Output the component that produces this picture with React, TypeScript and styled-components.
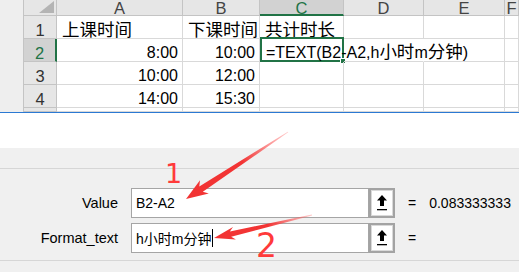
import React from "react";
import styled, { createGlobalStyle } from "styled-components";

const GREEN = "#217346";
const GRID = "#d9d9d9";
const HEAD_LINE = "#c4c4c4";

const GlobalStyle = createGlobalStyle`
  html, body {
    margin: 0;
    padding: 0;
    background: #ffffff;
  }
  body {
    font-family: "Liberation Sans", "Noto Sans CJK SC", sans-serif;
    color: #000;
  }
`;

const Page = styled.div`
  position: relative;
  width: 519px;
  height: 272px;
  overflow: hidden;
  display: flex;
  flex-direction: column;
  background: #fff;
`;

// 表格
const Sheet = styled.div`
  display: grid;
  grid-template-columns: 24px 33px 126px 77px 84px 80px 81px 14px;
  grid-template-rows: 16px repeat(4, 23px) 4px;
  border-bottom: 1px solid #2b79d3;
  font-size: 16px;
  line-height: 1;
`;

const Outline = styled.div`
  grid-row: 1 / -1;
  background: #eeeeee;
  border-right: 1px solid ${HEAD_LINE};
`;

const Corner = styled.div`
  position: relative;
  background: #e6e6e6;
  border-right: 1px solid ${HEAD_LINE};
  border-bottom: 1px solid ${HEAD_LINE};
  &::after {
    content: "";
    position: absolute;
    right: 2px;
    bottom: 2px;
    border-style: solid;
    border-width: 0 0 12px 15px;
    border-color: transparent transparent #b4b4b4 transparent;
  }
`;

const ColHead = styled.div<{ $active?: boolean }>`
  display: flex;
  justify-content: center;
  align-items: flex-start;
  font-size: 16.5px;
  background: ${(p) => (p.$active ? "#d2d2d2" : "#e6e6e6")};
  color: ${(p) => (p.$active ? GREEN : "#444")};
  border-right: 1px solid ${HEAD_LINE};
  border-bottom: ${(p) => (p.$active ? `2px solid ${GREEN}` : `1px solid ${HEAD_LINE}`)};
`;

const RowHead = styled.div<{ $active?: boolean }>`
  display: flex;
  justify-content: center;
  align-items: flex-end;
  font-size: 16.5px;
  background: ${(p) => (p.$active ? "#d2d2d2" : "#e6e6e6")};
  color: ${(p) => (p.$active ? GREEN : "#333")};
  border-right: ${(p) => (p.$active ? `2px solid ${GREEN}` : `1px solid ${HEAD_LINE}`)};
  border-bottom: 1px solid ${HEAD_LINE};
`;

const Cell = styled.div<{ $right?: boolean; $spill?: boolean }>`
  position: relative;
  display: flex;
  align-items: flex-end;
  justify-content: ${(p) => (p.$right ? "flex-end" : "flex-start")};
  padding: 0 4px 0 5px;
  min-width: 0;
  white-space: nowrap;
  border-right: 1px solid ${(p) => (p.$spill ? "transparent" : GRID)};
  border-bottom: 1px solid ${GRID};
`;

const Han = styled.span`
  font-size: 17.5px;
  line-height: 16px;
`;

const Spill = styled.span`
  position: relative;
  z-index: 1;
  padding-left: 1px;
`;

const Selection = styled.div`
  position: absolute;
  left: 0;
  top: -2px;
  right: -1px;
  bottom: -1px;
  border: 2px solid ${GREEN};
  pointer-events: none;
  &::after {
    content: "";
    position: absolute;
    right: -4px;
    bottom: -4px;
    width: 4px;
    height: 4px;
    background: ${GREEN};
    border: 1px solid #fff;
  }
`;

// 함수 인수 대화상자
const Dialog = styled.section`
  margin-top: 35px;
  flex: 1;
  background: #f0f0f0;
  padding-top: 20px;
  font-size: 14.5px;
`;

const Rule = styled.div`
  border-top: 1px solid #d6d6d6;
`;

const Form = styled.div`
  display: grid;
  grid-template-columns: 131px 238px 26px 1fr;
  grid-auto-rows: 30px;
  row-gap: 5px;
  align-items: center;
  padding: 19px 0 7px;
`;

const Label = styled.div`
  text-align: right;
  padding-right: 13px;
`;

const Field = styled.div`
  height: 30px;
  box-sizing: border-box;
  display: flex;
  align-items: center;
  padding-left: 4px;
  background: #fff;
  border: 1px solid #a5a5a5;
  font-size: 14px;
  white-space: nowrap;
`;

const Caret = styled.span`
  display: inline-block;
  width: 1px;
  height: 18px;
  margin-left: 1px;
  background: #000;
`;

const RefButton = styled.div`
  height: 30px;
  box-sizing: border-box;
  display: flex;
  border: 2px solid #a3a3a3;
  padding: 1px;
  background: #d9d9d9;
`;

const RefFace = styled.div`
  flex: 1;
  display: flex;
  align-items: center;
  justify-content: center;
  background: #fff;
`;

const Result = styled.div`
  display: flex;
  gap: 13px;
  padding-left: 13px;
  font-size: 14px;
`;

const Overlay = styled.svg`
  position: absolute;
  left: 0;
  top: 0;
  pointer-events: none;
`;

const Mark = styled.span<{ $left: number; $top: number; $size: number }>`
  position: absolute;
  left: ${(p) => p.$left}px;
  top: ${(p) => p.$top}px;
  font-family: "DejaVu Sans", sans-serif;
  font-size: ${(p) => p.$size}px;
  line-height: 1;
  color: #ff3a3a;
`;

const UpIcon: React.FC = () => (
  <svg width="10" height="16" viewBox="0 0 10 16">
    <polygon points="5,0 10,5.5 7,5.5 7,11 3,11 3,5.5 0,5.5" fill="#000" />
    <rect x="0" y="14" width="10" height="1.3" fill="#000" />
  </svg>
);

// 화살표 (꼬리는 가늘게, 머리는 넓게)
const arrowPoints = (
  x1: number,
  y1: number,
  x2: number,
  y2: number,
  head = 17,
  wing = 7.5,
  shaft = 3,
  tail = 0.4
) => {
  const dx = x2 - x1;
  const dy = y2 - y1;
  const L = Math.hypot(dx, dy);
  const ux = dx / L;
  const uy = dy / L;
  const nx = -uy;
  const ny = ux;
  const at = (u: number, v: number) =>
    `${(x1 + ux * u + nx * v).toFixed(1)},${(y1 + uy * u + ny * v).toFixed(1)}`;
  return [
    at(0, -tail),
    at(L - head, -shaft),
    at(L - head - 4, -wing),
    at(L, 0),
    at(L - head - 4, wing),
    at(L - head, shaft),
    at(0, tail),
  ].join(" ");
};

type Data = { text?: string; han?: boolean; right?: boolean; spill?: boolean; formula?: boolean };

const columns = ["A", "B", "C", "D", "E", "F"];

const rows: { n: string; active?: boolean; cells: Data[] }[] = [
  {
    n: "1",
    cells: [
      { text: "上课时间", han: true },
      { text: "下课时间", han: true },
      { text: "共计时长", han: true },
      {},
      {},
      {},
    ],
  },
  {
    n: "2",
    active: true,
    cells: [
      { text: "8:00", right: true },
      { text: "10:00", right: true },
      { formula: true, spill: true },
      { spill: true },
      {},
      {},
    ],
  },
  {
    n: "3",
    cells: [{ text: "10:00", right: true }, { text: "12:00", right: true }, {}, {}, {}, {}],
  },
  {
    n: "4",
    cells: [{ text: "14:00", right: true }, { text: "15:30", right: true }, {}, {}, {}, {}],
  },
  { n: "", cells: [{}, {}, {}, {}, {}, {}] },
];

const App: React.FC = () => {
  return (
    <>
      <GlobalStyle />
      <Page>
        <Sheet>
          <Outline />
          <Corner />
          {columns.map((c) => (
            <ColHead key={c} $active={c === "C"}>
              {c}
            </ColHead>
          ))}
          {rows.map((row, ri) => (
            <React.Fragment key={ri}>
              <RowHead $active={row.active}>{row.n}</RowHead>
              {row.cells.map((cell, ci) => (
                <Cell key={ci} $right={cell.right} $spill={cell.spill}>
                  {cell.formula ? (
                    <>
                      <Selection />
                      <Spill>
                        =TEXT(B2-A2,h<Han>小时</Han>m<Han>分钟</Han>)
                      </Spill>
                    </>
                  ) : cell.han ? (
                    <Han>{cell.text}</Han>
                  ) : (
                    cell.text
                  )}
                </Cell>
              ))}
            </React.Fragment>
          ))}
        </Sheet>

        <Dialog>
          <Rule />
          <Form>
            <Label>Value</Label>
            <Field>B2-A2</Field>
            <RefButton>
              <RefFace>
                <UpIcon />
              </RefFace>
            </RefButton>
            <Result>
              <span>=</span>
              <span>0.083333333</span>
            </Result>

            <Label>Format_text</Label>
            <Field>
              h小时m分钟
              <Caret />
            </Field>
            <RefButton>
              <RefFace>
                <UpIcon />
              </RefFace>
            </RefButton>
            <Result>
              <span>=</span>
            </Result>
          </Form>
          <Rule />
        </Dialog>

        <Overlay width="519" height="272" viewBox="0 0 519 272">
          <defs>
            <linearGradient id="a1" gradientUnits="userSpaceOnUse" x1="288" y1="132" x2="186" y2="199">
              <stop offset="0" stopColor="#ff6b6b" stopOpacity="0.35" />
              <stop offset="0.45" stopColor="#f23434" />
              <stop offset="1" stopColor="#f23434" />
            </linearGradient>
            <linearGradient id="a2" gradientUnits="userSpaceOnUse" x1="312" y1="215" x2="214" y2="238">
              <stop offset="0" stopColor="#ff6b6b" stopOpacity="0.35" />
              <stop offset="0.45" stopColor="#f23434" />
              <stop offset="1" stopColor="#f23434" />
            </linearGradient>
          </defs>
          <polygon points={arrowPoints(288, 132, 186, 199, 18, 8, 3.2)} fill="url(#a1)" />
          <polygon points={arrowPoints(312, 215, 214, 238, 17, 6.5, 2.8)} fill="url(#a2)" />
        </Overlay>
        <Mark $left={165} $top={160} $size={27}>
          1
        </Mark>
        <Mark $left={256} $top={229} $size={33}>
          2
        </Mark>
      </Page>
    </>
  );
};

export default App;
